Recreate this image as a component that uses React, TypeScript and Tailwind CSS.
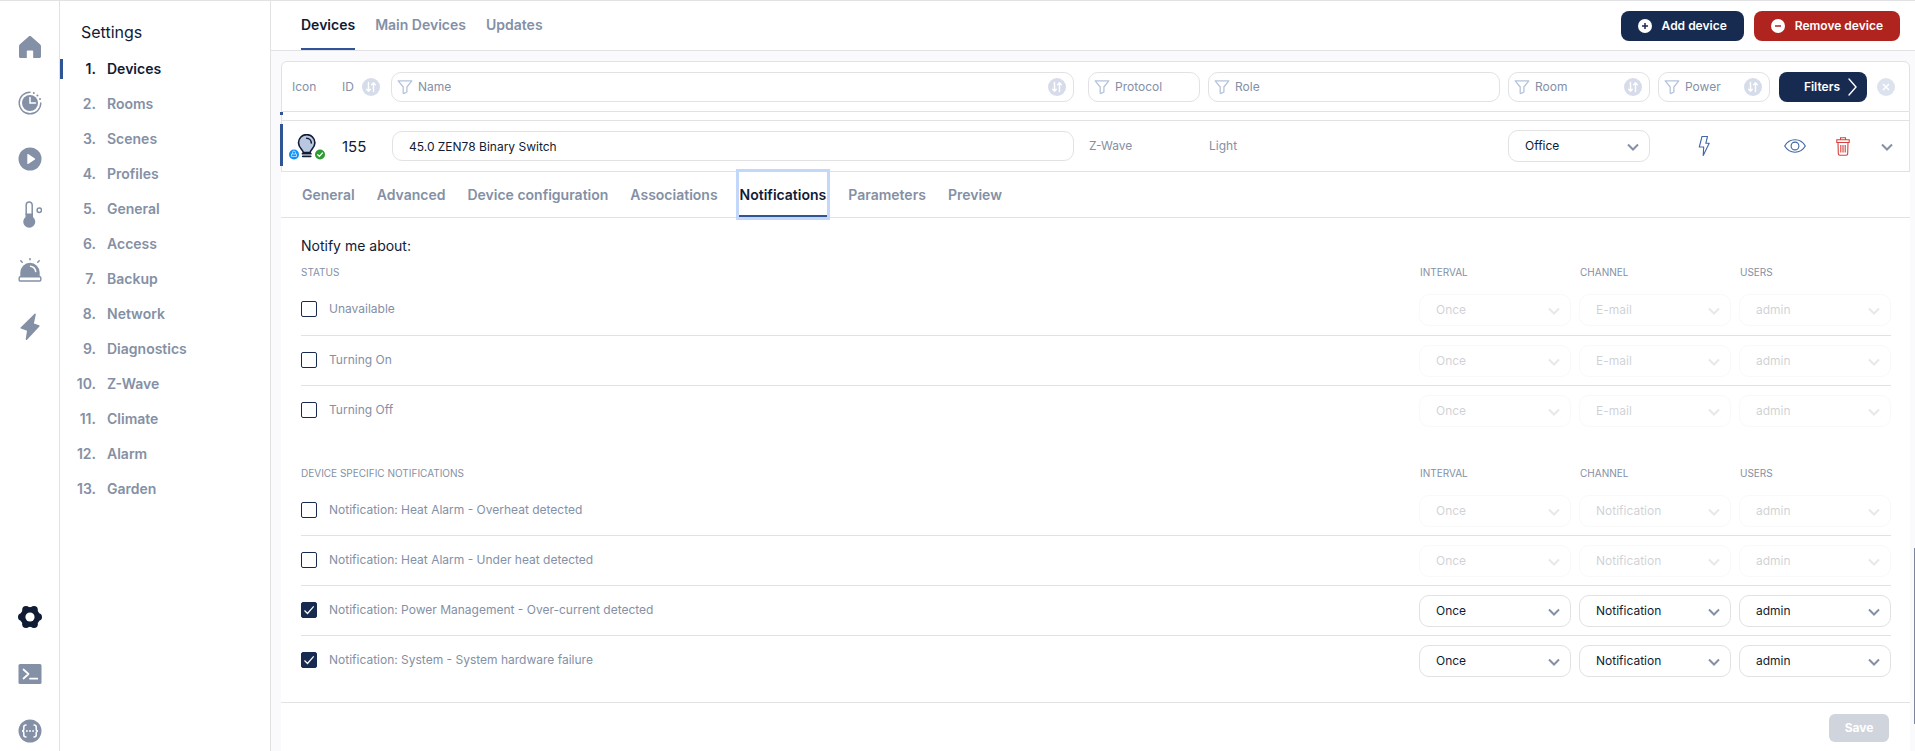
import React, { useState } from 'react';

const navItems = [
  'Devices',
  'Rooms',
  'Scenes',
  'Profiles',
  'General',
  'Access',
  'Backup',
  'Network',
  'Diagnostics',
  'Z-Wave',
  'Climate',
  'Alarm',
  'Garden',
];

const deviceTabs = [
  'General',
  'Advanced',
  'Device configuration',
  'Associations',
  'Notifications',
  'Parameters',
  'Preview',
];

interface NotificationRow {
  id: string;
  label: string;
  channel: string;
  enabled: boolean;
}

const statusRows: NotificationRow[] = [
  { id: 'unavailable', label: 'Unavailable', channel: 'E-mail', enabled: false },
  { id: 'turning-on', label: 'Turning On', channel: 'E-mail', enabled: false },
  { id: 'turning-off', label: 'Turning Off', channel: 'E-mail', enabled: false },
];

const specificRows: NotificationRow[] = [
  { id: 'overheat', label: 'Notification: Heat Alarm - Overheat detected', channel: 'Notification', enabled: false },
  { id: 'underheat', label: 'Notification: Heat Alarm - Under heat detected', channel: 'Notification', enabled: false },
  { id: 'overcurrent', label: 'Notification: Power Management - Over-current detected', channel: 'Notification', enabled: true },
  { id: 'hardware', label: 'Notification: System - System hardware failure', channel: 'Notification', enabled: true },
];

const HomeIcon = () => (
  <svg width="24" height="24" viewBox="0 0 24 24" fill="currentColor">
    <path d="M12.9 1.300 22 9.200c.6.500 1 1.200 1 2v10.300c0 .8-.7 1.500-1.500 1.500h-6.300v-6.500c0-.6-.4-1-1-1H9.800c-.6 0-1 .4-1 1V23H2.500C1.700 23 1 22.300 1 21.500V11.200c0-.8.300-1.500.900-2l9.100-7.900c.5-.5 1.400-.5 1.900 0Z" />
  </svg>
);

const ClockIcon = () => (
  <svg width="24" height="24" viewBox="0 0 24 24" fill="none">
    <path d="M12 1.200A10.800 10.800 0 1 0 22.800 12" stroke="currentColor" strokeWidth="1.400" strokeLinecap="round" />
    <circle cx="12" cy="12" r="8" fill="currentColor" />
    <path d="M12 6.500V12h5.500" stroke="#fff" strokeWidth="1.500" strokeLinecap="round" />
    <circle cx="15.800" cy="1.900" r="1" fill="currentColor" />
    <circle cx="19.400" cy="4.400" r="1" fill="currentColor" />
    <circle cx="22" cy="8" r="1" fill="currentColor" />
  </svg>
);

const PlayIcon = () => (
  <svg width="24" height="24" viewBox="0 0 24 24">
    <circle cx="12" cy="12" r="11.500" fill="currentColor" />
    <path d="M9.300 7.600v8.800c0 .5.500.8.900.5l6.700-4.400c.4-.2.4-.8 0-1l-6.700-4.400c-.4-.3-.9 0-.9.500Z" fill="#fff" />
  </svg>
);

const ThermometerIcon = () => (
  <svg width="24" height="28" viewBox="0 0 24 28" fill="none">
    <path d="M8.200 14V4a3 3 0 0 1 6 0v10" stroke="currentColor" strokeWidth="1.500" />
    <path d="M7.500 12.500h7.500v3.500a6 6 0 1 1-7.500 0Z" fill="currentColor" />
    <circle cx="21.300" cy="9.300" r="2.200" stroke="currentColor" strokeWidth="1.500" />
  </svg>
);

const SirenIcon = () => (
  <svg width="24" height="26" viewBox="0 0 24 26" fill="none">
    <path d="M2.300 18.500V14.500a9.700 9.700 0 0 1 19.400 0v4Z" fill="currentColor" />
    <path d="M12.500 8.200c2.700.4 4.700 2.400 5.200 5.300" stroke="#fff" strokeWidth="1.500" strokeLinecap="round" />
    <rect x="1.200" y="18.700" width="21.600" height="4.300" rx="1" fill="#fff" stroke="currentColor" strokeWidth="1.400" />
    <path d="M12 .5v1.300M2.800 2.800l1.400 1.400M21.200 2.800l-1.400 1.400" stroke="currentColor" strokeWidth="1.500" strokeLinecap="round" />
  </svg>
);

const EnergyIcon = () => (
  <svg width="24" height="28" viewBox="0 0 24 28" fill="currentColor">
    <path d="M16.600.8 2.600 14.400c-.4.400-.2 1 .3 1.200l6.100 2.200-1.300 8.500c-.1.600.6 1 1.100.6l12.600-13.400c.4-.4.200-1-.3-1.200l-5.200-1.800L17.800 1.400c.1-.7-.7-1.100-1.200-.6Z" />
  </svg>
);

// Six rounded teeth around a solid hub
const GearIcon = () => (
  <svg width="24" height="24" viewBox="0 0 24 24" fill="currentColor">
    <circle cx="12" cy="12" r="10" />
    <circle cx="20.200" cy="12" r="3.800" />
    <circle cx="16" cy="4.700" r="3.800" />
    <circle cx="8" cy="4.700" r="3.800" />
    <circle cx="3.800" cy="12" r="3.800" />
    <circle cx="8" cy="19.300" r="3.800" />
    <circle cx="16" cy="19.300" r="3.800" />
    <circle cx="12" cy="12" r="4.600" fill="#fff" />
  </svg>
);

const TerminalIcon = () => (
  <svg width="24" height="24" viewBox="0 0 24 24" fill="none">
    <rect x="0.500" y="2" width="23" height="20" rx="1.500" fill="currentColor" />
    <path d="M5.500 7.500l5 4.500-5 4.500M12 16.700h7.300" stroke="#fff" strokeWidth="1.700" strokeLinecap="round" strokeLinejoin="round" />
  </svg>
);

const BracesIcon = () => (
  <svg width="24" height="24" viewBox="0 0 24 24" fill="none">
    <circle cx="12" cy="12" r="11.500" fill="currentColor" />
    <path
      d="M8 6c-1.700 0-2.200.7-2.200 2v2c0 1.200-.6 2-1.800 2 1.200 0 1.800.8 1.800 2v2c0 1.300.5 2 2.200 2M16 6c1.700 0 2.200.7 2.200 2v2c0 1.200.6 2 1.800 2-1.200 0-1.800.8-1.800 2v2c0 1.300-.5 2-2.200 2"
      stroke="#fff"
      strokeWidth="1.500"
      strokeLinecap="round"
    />
    <circle cx="8.900" cy="12" r="0.900" fill="#fff" />
    <circle cx="12" cy="12" r="0.900" fill="#fff" />
    <circle cx="15.100" cy="12" r="0.900" fill="#fff" />
  </svg>
);

const SortIcon = () => (
  <svg width="18" height="18" viewBox="0 0 18 18" fill="none" className="shrink-0">
    <circle cx="9" cy="9" r="9" fill="#d6dcea" />
    <path d="M6.500 4.500v8.500M4.700 11.200l1.800 2 1.800-2M11.500 13.500V5M9.700 6.800l1.800-2 1.800 2" stroke="#fff" strokeWidth="1.400" strokeLinecap="round" strokeLinejoin="round" />
  </svg>
);

const FunnelIcon = () => (
  <svg width="16" height="16" viewBox="0 0 16 16" fill="none" className="shrink-0">
    <path d="M1.200 1.800h13.600L9.900 8v5l-2.700 1.400c-.5.200-1 0-1-.5V8Z" stroke="#b5c3dd" strokeWidth="1.300" strokeLinejoin="round" />
  </svg>
);

const Chevron = () => (
  <svg width="12" height="8" viewBox="0 0 12 8" fill="none">
    <path d="M1 1.500l5 5 5-5" stroke="#8490a5" strokeWidth="2" />
  </svg>
);

interface SelectBoxProps {
  label: string;
  value: string;
  disabled?: boolean;
}

const SelectBox: React.FC<SelectBoxProps> = ({ label, value, disabled }) => (
  <div className={`relative w-full ${disabled ? 'opacity-20' : ''}`}>
    <select
      aria-label={label}
      disabled={disabled}
      defaultValue={value}
      className="block h-8 w-full appearance-none rounded-[10px] border border-[#e2e2e4] bg-white pl-4 pr-8 text-xs text-[#101b35] opacity-100"
    >
      <option>{value}</option>
    </select>
    <span className="pointer-events-none absolute inset-y-0 right-[11px] flex items-center pt-[2px]">
      <Chevron />
    </span>
  </div>
);

interface FilterBoxProps {
  label: string;
  sortable?: boolean;
  className: string;
}

const FilterBox: React.FC<FilterBoxProps> = ({ label, sortable, className }) => (
  <div className={`flex h-[30px] items-center gap-[5px] rounded-[10px] border border-[#e2e2e4] bg-white pl-[5px] pr-[7px] ${className}`}>
    <FunnelIcon />
    <input
      aria-label={label}
      placeholder={label}
      className="w-full min-w-0 flex-1 bg-transparent text-xs text-[#101b35] outline-none placeholder:text-[#8490a5]"
    />
    {sortable && (
      <button aria-label={`Sort by ${label}`}>
        <SortIcon />
      </button>
    )}
  </div>
);

interface SectionProps {
  title: string;
  rows: NotificationRow[];
}

const NotificationSection: React.FC<SectionProps> = ({ title, rows }) => {
  const [checked, setChecked] = useState<Record<string, boolean>>(
    Object.fromEntries(rows.map((row) => [row.id, row.enabled]))
  );

  return (
    <table className="w-full table-fixed">
      <thead>
        <tr className="h-[26px] align-top text-left text-[10px] leading-[26px] text-[#8490a5] uppercase">
          <th className="p-0 font-normal">{title}</th>
          <th className="w-[160px] p-0 pl-px font-normal">Interval</th>
          <th className="w-[160px] p-0 pl-px font-normal">Channel</th>
          <th className="w-[152px] p-0 pl-px font-normal">Users</th>
        </tr>
      </thead>
      <tbody>
        {rows.map((row) => (
          <tr key={row.id} className="h-[50px] border-b border-[#e2e2e4] last:border-transparent">
            <td className="p-0 pb-px">
              <label className="flex items-center gap-3 text-xs text-[#8490a5]">
                <span className="relative flex h-4 w-4">
                  <input
                    type="checkbox"
                    checked={checked[row.id]}
                    onChange={() => setChecked({ ...checked, [row.id]: !checked[row.id] })}
                    className="h-4 w-4 appearance-none rounded-xs border border-[#172b51] bg-white checked:bg-[#172b51]"
                  />
                  {checked[row.id] && (
                    <svg width="16" height="16" viewBox="0 0 16 16" fill="none" className="pointer-events-none absolute inset-0">
                      <path d="M3.500 8.500l3 3 6.200-7.200" stroke="#fff" strokeWidth="1.200" />
                    </svg>
                  )}
                </span>
                {row.label}
              </label>
            </td>
            <td className="p-0 pt-px pr-2">
              <SelectBox label={`${row.label} interval`} value="Once" disabled={!checked[row.id]} />
            </td>
            <td className="p-0 pt-px pr-2">
              <SelectBox label={`${row.label} channel`} value={row.channel} disabled={!checked[row.id]} />
            </td>
            <td className="p-0 pt-px">
              <SelectBox label={`${row.label} users`} value="admin" disabled={!checked[row.id]} />
            </td>
          </tr>
        ))}
      </tbody>
    </table>
  );
};

const Rail = () => {
  const top = [
    { name: 'Home', icon: <HomeIcon /> },
    { name: 'History', icon: <ClockIcon /> },
    { name: 'Scenes', icon: <PlayIcon /> },
    { name: 'Climate', icon: <ThermometerIcon /> },
    { name: 'Alarm', icon: <SirenIcon /> },
    { name: 'Energy', icon: <EnergyIcon /> },
  ];
  const bottom = [
    { name: 'Settings', icon: <GearIcon />, active: true },
    { name: 'Console', icon: <TerminalIcon /> },
    { name: 'API', icon: <BracesIcon /> },
  ];

  return (
    <nav className="flex w-[60px] shrink-0 flex-col justify-between border-r border-[#e2e2e4] pt-[18px] text-[#8490a5]">
      <div className="flex flex-col">
        {top.map((item) => (
          <a key={item.name} href="#" aria-label={item.name} className="flex h-14 items-center justify-center">
            {item.icon}
          </a>
        ))}
      </div>
      <div className="-mb-2 flex flex-col gap-px">
        {bottom.map((item) => (
          <a
            key={item.name}
            href="#"
            aria-label={item.name}
            className={`flex h-14 items-center justify-center ${item.active ? 'text-[#101b35]' : ''}`}
          >
            {item.icon}
          </a>
        ))}
      </div>
    </nav>
  );
};

const SettingsNav = () => (
  <aside className="w-[211px] shrink-0 border-r border-[#e2e2e4] pt-[19px]">
    <h1 className="pl-[21px] text-base leading-6 text-[#101b35]">Settings</h1>
    <ol className="mt-2">
      {navItems.map((item, i) => (
        <li key={item} className="h-[35px] pt-[7px]">
          <a
            href="#"
            className={`flex h-5 w-full items-center gap-[11px] border-l-3 text-sm font-semibold ${
              i === 0 ? 'border-[#2f5597] text-[#101b35]' : 'border-transparent text-[#8490a5]'
            }`}
          >
            <span className="w-[33px] text-right">{i + 1}.</span>
            {item}
          </a>
        </li>
      ))}
    </ol>
  </aside>
);

const TopBar = () => (
  <header className="flex h-[50px] shrink-0 items-center justify-between border-b border-[#e2e2e4] bg-white pl-[30px] pr-[15px]">
    <div className="flex h-full gap-5 text-sm font-semibold text-[#8490a5]">
      <button className="border-b-2 border-[#2f5597] text-[#101b35]">Devices</button>
      <button className="border-b-2 border-transparent">Main Devices</button>
      <button className="border-b-2 border-transparent">Updates</button>
    </div>
    <div className="flex gap-[10px] text-xs font-semibold text-white">
      <button className="flex h-[30px] items-center gap-[10px] rounded-lg bg-[#172b51] px-[17px]">
        <svg width="14" height="14" viewBox="0 0 14 14">
          <circle cx="7" cy="7" r="7" fill="#fff" />
          <path d="M7 4v6M4 7h6" stroke="#172b51" strokeWidth="1.500" />
        </svg>
        Add device
      </button>
      <button className="flex h-[30px] items-center gap-[10px] rounded-lg bg-[#b0241f] px-[17px]">
        <svg width="14" height="14" viewBox="0 0 14 14">
          <circle cx="7" cy="7" r="7" fill="#fff" />
          <path d="M4 7h6" stroke="#b0241f" strokeWidth="1.500" />
        </svg>
        Remove device
      </button>
    </div>
  </header>
);

const FilterRow = () => (
  <div className="flex h-[51px] shrink-0 items-center rounded-t-md border border-[#e2e2e4] bg-white text-xs text-[#8490a5]">
    <span className="w-[60px] pl-[10px]">Icon</span>
    <span className="flex w-[49px] items-center gap-2">
      ID
      <button aria-label="Sort by ID">
        <SortIcon />
      </button>
    </span>
    <FilterBox label="Name" sortable className="flex-1" />
    <FilterBox label="Protocol" className="ml-[14px] w-[112px]" />
    <FilterBox label="Role" className="ml-2 w-[292px]" />
    <FilterBox label="Room" sortable className="ml-2 w-[142px]" />
    <FilterBox label="Power" sortable className="ml-2 w-[112px]" />
    <button className="ml-[9px] flex h-[30px] w-[88px] items-center justify-end gap-2 rounded-lg bg-[#172b51] pr-[10px] font-semibold text-white">
      Filters
      <svg width="9" height="18" viewBox="0 0 9 18" fill="none">
        <path d="M1 1l7 8-7 8" stroke="#fff" strokeWidth="1.400" strokeLinecap="round" />
      </svg>
    </button>
    <button aria-label="Clear filters" className="mr-[14px] ml-[10px]">
      <svg width="18" height="18" viewBox="0 0 18 18" fill="none">
        <circle cx="9" cy="9" r="9" fill="#dde3ee" />
        <path d="M6 6l6 6M12 6l-6 6" stroke="#fff" strokeWidth="1.500" />
      </svg>
    </button>
  </div>
);

const DeviceRow = () => (
  <div className="flex h-[52px] shrink-0 items-center border border-[#e2e2e4] bg-white text-xs text-[#8490a5]">
    <span className="mb-[2px] -ml-[2px] h-[42px] w-[3px] bg-[#2f5597]" />
    <span className="mt-1 ml-[5px] flex h-7 w-[54px]">
      <svg width="38" height="28" viewBox="0 0 38 28" fill="none">
        <path
          d="M15.300 18.500c0-2.600-4.800-4-4.800-9.700a8.200 8.200 0 0 1 16.400 0c0 5.700-4.800 7.100-4.800 9.700Z"
          fill="#b9c7e0"
          stroke="#101b35"
          strokeWidth="1.600"
        />
        <path d="M18.700 4.200a4.800 4.800 0 0 1 4.600 4.800" stroke="#101b35" strokeWidth="1.500" strokeLinecap="round" />
        <path d="M14.500 19.700h8.400M14.700 22.300h8" stroke="#101b35" strokeWidth="1.700" strokeLinecap="round" />
        <circle cx="6" cy="20.500" r="5" fill="#0b93ff" />
        <path d="M3.500 20h5v2.500h-5zM4.500 20v-1.500a1.500 1.500 0 0 1 3 0V20" stroke="#cfe9ff" strokeWidth="0.800" />
        <circle cx="32" cy="20.500" r="5" fill="#2e9b33" />
        <path d="M29.700 20.700l1.700 1.600 3-3.300" stroke="#fff" strokeWidth="1.200" strokeLinecap="round" />
      </svg>
    </span>
    <span className="w-[50px] pt-[2px] text-[15px] text-[#101b35]">155</span>
    <input
      aria-label="Device name"
      defaultValue="45.0 ZEN78 Binary Switch"
      className="h-[30px] min-w-0 flex-1 rounded-[10px] border border-[#e2e2e4] bg-white px-4 text-xs text-[#101b35]"
    />
    <span className="ml-[15px] w-[120px]">Z-Wave</span>
    <span className="w-[299px]">Light</span>
    <div className="w-[142px]">
      <SelectBox label="Room" value="Office" />
    </div>
    <span className="flex w-[108px] justify-center">
      <svg width="12" height="22" viewBox="0 0 12 22" fill="none">
        <path d="M4 1.500h5.500L7.800 8.300h3.400L5.200 20.500 5.700 12H1.300Z" stroke="#4166a8" strokeWidth="1.100" strokeLinejoin="round" />
      </svg>
    </span>
    <div className="mr-[16px] ml-[26px] flex items-center">
      <button aria-label="Visibility">
        <svg width="22" height="14" viewBox="0 0 22 14" fill="none" stroke="#3f64a5" strokeWidth="1.100">
          <path d="M.7 7C3 3.100 6.600.8 11 .8S19 3.100 21.300 7c-2.300 3.900-5.900 6.200-10.300 6.200S3 10.900.7 7Z" />
          <circle cx="11" cy="7" r="3.900" />
        </svg>
      </button>
      <button aria-label="Delete" className="ml-[30px]">
        <svg width="14" height="19" viewBox="0 0 14 19" fill="none" stroke="#d6403e" strokeWidth="1.100">
          <path d="M4.500 2.800V.8h5v2M.8 2.800h12.400v2.700H.8zM2 5.500l.3 11c0 1 .6 1.700 1.600 1.700h6.200c1 0 1.600-.7 1.600-1.700l.3-11M4.800 8v7.500M7 8v7.500M9.200 8v7.500" />
        </svg>
      </button>
      <button aria-label="Collapse" className="ml-[31px] pt-[2px]">
        <Chevron />
      </button>
    </div>
  </div>
);

const App: React.FC = () => {
  const [tab, setTab] = useState('Notifications');

  return (
    <div className="relative flex h-screen overflow-hidden border-t border-[#e2e2e4] bg-white font-['Inter',sans-serif]">
      <Rail />
      <SettingsNav />
      <main className="flex min-w-0 flex-1 flex-col bg-[#fafafc]">
        <TopBar />
        <div className="flex min-h-0 flex-1 flex-col pt-[10px] pr-[5px] pl-[10px]">
          <FilterRow />
          {/* Tail of the previous device row scrolled under the filters */}
          <div className="flex h-2 shrink-0 border-x border-[#e2e2e4] bg-white">
            <span className="-ml-[2px] h-[3px] w-[3px] bg-[#2f5597]" />
          </div>
          <DeviceRow />

          <div className="flex flex-1 flex-col bg-white">
            <div className="flex h-[46px] shrink-0 gap-5 border-b border-[#e2e2e4] pl-5 text-sm font-semibold text-[#8490a5]">
              {deviceTabs.map((name) => (
                <button
                  key={name}
                  onClick={() => setTab(name)}
                  className={`border-b-2 px-px pt-[2px] ${
                    tab === name
                      ? 'border-[#2f5597] text-[#101b35] ring-3 ring-[#c3d7fb]'
                      : 'border-transparent'
                  }`}
                >
                  {name}
                </button>
              ))}
            </div>

            <div className="pr-[19px] pl-5">
              <h2 className="mt-[15px] mb-px text-sm leading-[25px] text-[#101b35]">Notify me about:</h2>
              <NotificationSection title="Status" rows={statusRows} />
              <div className="mt-6">
                <NotificationSection title="Device specific notifications" rows={specificRows} />
              </div>
            </div>

            <div className="mt-4 flex justify-end border-t border-[#e2e2e4] pt-[11px] pr-[21px]">
              <button disabled className="h-7 w-[60px] rounded-md bg-[#d0d5dd] text-xs font-bold text-white">
                Save
              </button>
            </div>
          </div>
        </div>
      </main>
      {/* Scrollbar thumb */}
      <div className="absolute top-[547px] right-0 h-[176px] w-px bg-[#7c879b]" />
    </div>
  );
};

export default App;
